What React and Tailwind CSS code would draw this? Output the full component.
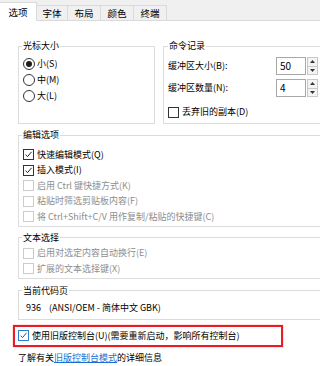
const tabs = [
  { label: '选项', w: 'w-[37px]', active: true },
  { label: '字体', w: 'w-[31px]' },
  { label: '布局', w: 'w-[33px]' },
  { label: '颜色', w: 'w-[33px]' },
  { label: '终端', w: 'w-[33px]' },
];

const Check = ({ checked, disabled, blue }) => (
  <span
    className={`w-[11px] h-[11px] shrink-0 border flex items-center justify-center bg-white ${
      disabled ? 'border-[#cccccc]' : blue ? 'border-[#2f7fc7]' : 'border-[#333333]'
    }`}
  >
    {checked && (
      <svg width="9" height="9" viewBox="0 0 9 9">
        <path d="M1.5 4.6 L3.5 6.6 L7.6 1.8" fill="none" stroke={blue ? '#1f5f99' : '#222'} strokeWidth="1" />
      </svg>
    )}
  </span>
);

const Radio = ({ checked }) => (
  <span className="w-[12px] h-[12px] shrink-0 rounded-full border border-[#333333] flex items-center justify-center bg-white">
    {checked && <span className="w-[6px] h-[6px] rounded-full bg-[#1e1e1e]" />}
  </span>
);

const CheckRow = ({ label, checked, disabled }) => (
  <div className="h-[15.5px] flex items-center gap-[3px] pl-[1px]">
    <Check checked={checked} disabled={disabled} />
    <span className={disabled ? 'text-[#8e8e8e]' : 'text-black'}>{label}</span>
  </div>
);

const Group = ({ title, className = '', children }) => (
  <fieldset className={`border border-[#dcdcdc] px-[3px] ${className}`}>
    <legend className="px-[1px] leading-[16px] text-black">{title}</legend>
    {children}
  </fieldset>
);

const Spin = ({ value }) => (
  <div className="flex items-stretch gap-[1px] h-[18px]">
    <div className="w-[30px] border border-[#a8a8a8] bg-white flex items-center pl-[3px] text-[10px] text-black">{value}</div>
    <div className="w-[11px] flex flex-col border border-[#c8c8c8] bg-[#f4f4f4]">
      <div className="flex-1 flex items-center justify-center border-b border-[#c8c8c8]">
        <svg width="5" height="3" viewBox="0 0 5 3"><path d="M0 3 L2.5 0 L5 3Z" fill="#333" /></svg>
      </div>
      <div className="flex-1 flex items-center justify-center">
        <svg width="5" height="3" viewBox="0 0 5 3"><path d="M0 0 L2.5 3 L5 0Z" fill="#333" /></svg>
      </div>
    </div>
  </div>
);

export default function App() {
  return (
    <div className="w-[320px] h-[366px] overflow-hidden bg-white text-[9px] leading-[16px] text-black font-['Microsoft_YaHei','Noto_Sans_CJK_SC',sans-serif]">
      <div className="h-[21px] flex items-end bg-[#f0f0f0] border-b border-[#dadada] text-[9.5px]">
        {tabs.map((t) =>
          t.active ? (
            <div key={t.label} className={`${t.w} h-[19px] mb-[-1px] relative bg-white border-t border-r border-[#dadada] flex items-center justify-center`}>
              {t.label}
            </div>
          ) : (
            <div key={t.label} className={`${t.w} h-[15px] border-t border-r border-[#dadada] flex items-center justify-center`}>
              {t.label}
            </div>
          )
        )}
      </div>

      <div className="pl-[18px] w-[360px]">
        <div className="flex gap-[8px] mt-[17px]">
          <Group title="光标大小" className="w-[137px]">
            <div className="pt-[2px] pl-[1px]">
              {[
                ['小(S)', true],
                ['中(M)', false],
                ['大(L)', false],
              ].map(([l, c]) => (
                <div key={l} className="h-[16px] flex items-center gap-[2px]">
                  <Radio checked={c} />
                  <span>{l}</span>
                </div>
              ))}
            </div>
          </Group>
          <Group title="命令记录" className="w-[170px] pl-[4px]">
            <div className="pt-[3px] pb-[3px] flex flex-col">
              <div className="flex items-center">
                <span className="w-[108px]">缓冲区大小(B):</span>
                <Spin value="50" />
              </div>
              <div className="flex items-center mt-[4px]">
                <span className="w-[108px]">缓冲区数量(N):</span>
                <Spin value="4" />
              </div>
              <div className="h-[16px] flex items-center gap-[3px] mt-[7px]">
                <Check />
                <span>丢弃旧的副本(D)</span>
              </div>
            </div>
          </Group>
        </div>

        <Group title="编辑选项" className="w-[320px] mt-[3px]">
          <div className="pt-[4px] pb-[1px]">
            <CheckRow label="快速编辑模式(Q)" checked />
            <CheckRow label="插入模式(I)" checked />
            <CheckRow label="启用 Ctrl 键快捷方式(K)" disabled />
            <CheckRow label="粘贴时筛选剪贴板内容(F)" disabled />
            <CheckRow label="将 Ctrl+Shift+C/V 用作复制/粘贴的快捷键(C)" disabled />
          </div>
        </Group>

        <Group title="文本选择" className="w-[320px] mt-[3px]">
          <div className="pb-[1px]">
            <CheckRow label="启用对选定内容自动换行(E)" disabled />
            <CheckRow label="扩展的文本选择键(X)" disabled />
          </div>
        </Group>

        <Group title="当前代码页" className="w-[320px] mt-[4px]">
          <div className="pt-[1px] pb-[3px] pl-[4px] h-[20px] flex items-center">
            <span>936</span>
            <span className="ml-[8px]">(ANSI/OEM - 简体中文 GBK)</span>
          </div>
        </Group>

        <div className="mt-[5px] ml-[-5px] w-[270px] h-[22px] border-2 border-[#ea1b24] shadow-[0_0_1px_#ff6060] flex items-center gap-[3px] pl-[3px]">
          <Check checked blue />
          <span>使用旧版控制台(U)(需要重新启动，影响所有控制台)</span>
        </div>

        <div className="mt-[3px] h-[16px] flex items-center">
          <span>了解有关</span>
          <span className="text-[#1a6fd1] underline">旧版控制台模式</span>
          <span>的详细信息</span>
        </div>
      </div>
    </div>
  );
}
